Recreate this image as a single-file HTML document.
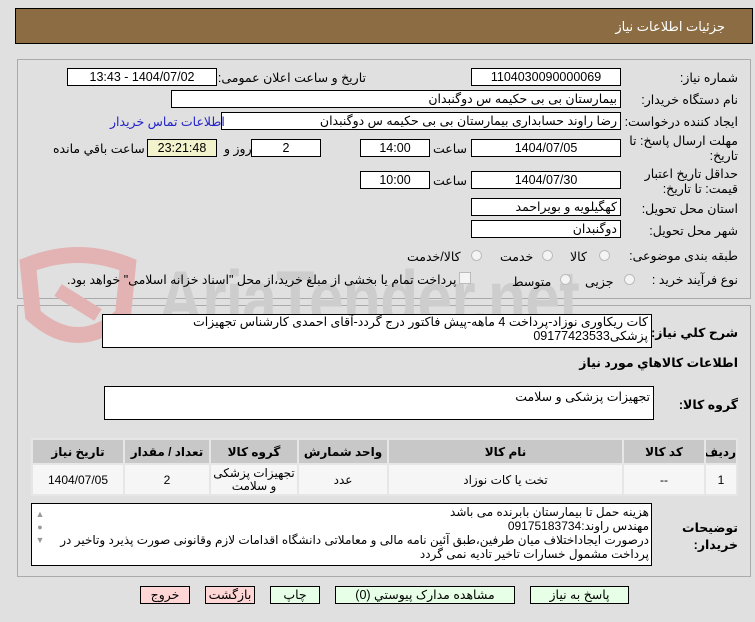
<!DOCTYPE html>
<html><head><meta charset="utf-8"><style>
*{box-sizing:border-box;margin:0;padding:0}
body{width:755px;height:622px;background:#e0e0e0;font-family:"Liberation Sans","DejaVu Sans",sans-serif;font-size:12.5px;color:#000;position:relative;overflow:hidden}
.a{position:absolute;white-space:nowrap}
.box{position:absolute;background:#fff;border:1px solid #000;height:18px;line-height:16px;padding:0 3px;direction:rtl;text-align:right;overflow:hidden;white-space:nowrap}
.c{text-align:center}
.lbl{position:absolute;direction:rtl;text-align:right;white-space:nowrap}
.b{font-weight:bold}
.btn{position:absolute;height:18px;border:1px solid #000;text-align:center;line-height:16px;top:586px}
.radio{position:absolute;width:11px;height:11px;border-radius:50%;border:1px solid #bbb;background:#f4f4f4}
td{border:2px solid #e6e6e6;text-align:center;direction:rtl;overflow:hidden;white-space:normal}
</style></head><body>
<div class="a" style="left:15px;top:8px;width:738px;height:36px;background:#8b6c43;border:1px solid #000"></div>
<div class="a" style="right:30px;top:19px;color:#fff;font-size:13px;direction:rtl">جزئیات اطلاعات نیاز</div>

<div class="a" style="left:17px;top:59px;width:734px;height:240px;border:1px solid #aaa"></div>
<div class="a" style="left:17px;top:305px;width:734px;height:272px;border:1px solid #aaa"></div>

<!-- watermark -->
<div class="a" style="left:18px;top:245px;width:600px;height:110px;overflow:hidden">
<svg class="a" style="left:0;top:0" width="130" height="110"><path d="M10 20 Q60 0 110 20 L105 70 Q60 110 15 70 Z" fill="none" stroke="#e3b3b3" stroke-width="16"/><path d="M40 45 L80 70" stroke="#e3b3b3" stroke-width="14"/></svg>
<div class="a" style="left:140px;top:8px;font-size:78px;font-weight:bold;color:#cdcdcd;letter-spacing:-1px;transform:scaleX(.8);transform-origin:left">AriaTender.net</div>
</div>

<div class="lbl" style="right:17px;top:70px">شماره نیاز:</div>
<div class="box c" style="left:471px;top:68px;width:150px">1104030090000069</div>
<div class="lbl" style="right:389px;top:70px">تاریخ و ساعت اعلان عمومی:</div>
<div class="box c" style="left:67px;top:68px;width:150px">1404/07/02 - 13:43</div>

<div class="lbl" style="right:17px;top:92px">نام دستگاه خریدار:</div>
<div class="box" style="left:171px;top:90px;width:450px">بیمارستان بی بی حکیمه س  دوگنبدان</div>

<div class="lbl" style="right:17px;top:114px">ایجاد کننده درخواست:</div>
<div class="box" style="left:221px;top:112px;width:400px">رضا راوند حسابداری بیمارستان بی بی حکیمه س  دوگنبدان</div>
<div class="lbl" style="left:110px;top:114px;color:#2222cc">اطلاعات تماس خریدار</div>

<div class="lbl" style="right:17px;top:134px;line-height:15px">مهلت ارسال پاسخ: تا<br>تاریخ:</div>
<div class="box c" style="left:471px;top:139px;width:150px">1404/07/05</div>
<div class="lbl" style="left:433px;top:141px">ساعت</div>
<div class="box c" style="left:360px;top:139px;width:70px">14:00</div>
<div class="box c" style="left:251px;top:139px;width:70px">2</div>
<div class="lbl" style="left:224px;top:141px">روز و</div>
<div class="box c" style="left:147px;top:139px;width:70px;background:#f2f2cc">23:21:48</div>
<div class="lbl" style="left:53px;top:141px">ساعت باقي مانده</div>

<div class="lbl" style="right:17px;top:167px;line-height:15px">حداقل تاریخ اعتبار<br>قیمت: تا تاریخ:</div>
<div class="box c" style="left:471px;top:171px;width:150px">1404/07/30</div>
<div class="lbl" style="left:433px;top:173px">ساعت</div>
<div class="box c" style="left:360px;top:171px;width:70px">10:00</div>

<div class="lbl" style="right:17px;top:201px">استان محل تحویل:</div>
<div class="box" style="left:471px;top:198px;width:150px">کهگیلویه و بویراحمد</div>
<div class="lbl" style="right:17px;top:223px">شهر محل تحویل:</div>
<div class="box" style="left:471px;top:220px;width:150px">دوگنبدان</div>

<div class="lbl" style="right:17px;top:248px">طبقه بندی موضوعی:</div>
<div class="radio" style="left:599px;top:250px"></div><div class="lbl" style="left:570px;top:249px">کالا</div>
<div class="radio" style="left:542px;top:250px"></div><div class="lbl" style="left:500px;top:249px">خدمت</div>
<div class="radio" style="left:471px;top:250px"></div><div class="lbl" style="left:407px;top:249px">کالا/خدمت</div>

<div class="lbl" style="right:17px;top:272px">نوع فرآیند خرید :</div>
<div class="radio" style="left:624px;top:274px"></div><div class="lbl" style="left:585px;top:274px">جزیی</div>
<div class="radio" style="left:560px;top:274px"></div><div class="lbl" style="left:512px;top:274px">متوسط</div>
<div class="a" style="left:459px;top:272px;width:12px;height:12px;border:1px solid #bbb;background:#f4f4f4"></div>
<div class="lbl" style="left:67px;top:272px">پرداخت تمام یا بخشی از مبلغ خرید،از محل "اسناد خزانه اسلامی" خواهد بود.</div>

<div class="lbl b" style="right:17px;top:325px">شرح کلي نياز:</div>
<div class="box" style="left:102px;top:314px;width:550px;height:34px;line-height:14px;background:#fff">کات ریکاوری نوزاد-پرداخت 4 ماهه-پیش فاکتور درج گردد-آقای احمدی کارشناس تجهیزات<br>پزشکی09177423533</div>
<div class="lbl b" style="right:17px;top:355px">اطلاعات کالاهاي مورد نياز</div>
<div class="lbl b" style="right:17px;top:397px">گروه کالا:</div>
<div class="box" style="left:104px;top:386px;width:550px;height:34px;padding-top:2px">تجهیزات پزشکی و سلامت</div>

<table class="a" style="left:31px;top:438px;width:707px;height:58px;border-collapse:collapse;border:2px solid #ccc;background:#ddd;font-size:12px;table-layout:fixed;white-space:normal">
<colgroup><col style="width:92px"><col style="width:86px"><col style="width:88px"><col style="width:90px"><col style="width:235px"><col style="width:82px"><col></colgroup>
<tr style="background:#c8c8c8;font-weight:bold;height:25px"><td>تاریخ نیاز</td><td>تعداد / مقدار</td><td>گروه کالا</td><td>واحد شمارش</td><td>نام کالا</td><td>کد کالا</td><td>ردیف</td></tr>
<tr style="background:#f6f6f6"><td>1404/07/05</td><td>2</td><td style="line-height:13px">تجهیزات پزشکی و سلامت</td><td>عدد</td><td>تخت یا کات نوزاد</td><td>--</td><td>1</td></tr>
</table>

<div class="lbl b" style="right:17px;top:520px;line-height:17px;text-align:right">توضیحات<br>خریدار:</div>
<div class="box" style="left:31px;top:503px;width:621px;height:63px;padding:0"></div>
<div class="a" style="left:50px;top:505px;width:599px;height:60px;line-height:14px;direction:rtl;text-align:right;overflow:hidden;font-size:12px">هزینه حمل تا بیمارستان بابرنده می باشد<br>مهندس راوند:09175183734<br>درصورت ایجاداختلاف میان طرفین،طبق آئین نامه مالی و معاملاتی دانشگاه اقدامات لازم وقانونی صورت پذیرد وتاخیر در<br>پرداخت مشمول خسارات تاخیر تادیه نمی گردد</div>
<div class="a" style="left:34px;top:508px;color:#999;font-size:9px;line-height:13px;text-align:center;width:12px">▲<br>●<br>▼</div>

<div class="btn" style="left:140px;width:50px;background:#ffd6d6">خروج</div>
<div class="btn" style="left:205px;width:50px;background:#ffd6d6">بازگشت</div>
<div class="btn" style="left:270px;width:50px;background:#e6ffe6">چاپ</div>
<div class="btn" style="left:335px;width:180px;background:#e6ffe6">مشاهده مدارک پیوستي (0)</div>
<div class="btn" style="left:530px;width:99px;background:#e6ffe6">پاسخ به نیاز</div>
</body></html>
